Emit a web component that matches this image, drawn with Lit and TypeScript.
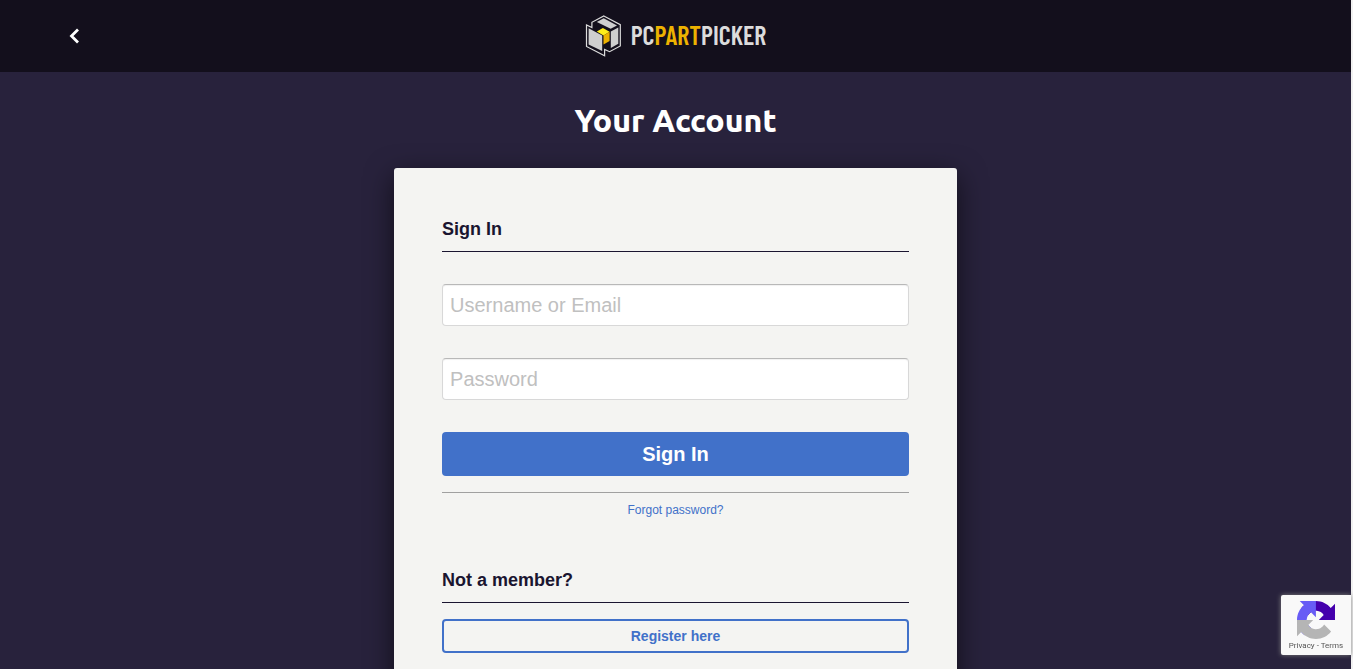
import { LitElement, html, css } from "lit";
import { customElement } from "lit/decorators.js";

@customElement("site-header")
class SiteHeader extends LitElement {
  static styles = css`
    :host { display: block; background: #130f1c; }
    .bar {
      display: grid;
      grid-template-columns: 1fr auto 1fr;
      align-items: center;
      height: 72px;
      padding: 0 5%;
    }
    .back { display: block; width: 16px; height: 16px; }
    .back svg { display: block; }
    .logo {
      display: flex;
      align-items: center;
      gap: 10px;
      color: #dcdcdc;
      text-decoration: none;
      font: 600 26px/40px "Barlow Condensed", "Roboto Condensed", "Liberation Sans Narrow", sans-serif;
    }
    .name { padding-bottom: 2px; }
    .accent { color: #edb200; }
  `;
  render() {
    return html`
      <header class="bar">
        <a class="back" href="#" aria-label="Back">
          <svg width="16" height="16" viewBox="0 0 16 16" fill="none" stroke="#fff" stroke-width="2.8">
            <path d="M10 1.500 3.500 8l6.500 6.500" />
          </svg>
        </a>
        <a class="logo" href="#" aria-label="PCPartPicker">
          <svg width="36" height="42" viewBox="0 0 36 42">
            <path fill="none" stroke="#dcdcdc" stroke-width="1.2"
              d="M18.8 1 35.300 9.700V31L24.600 36.700 19.600 34.500V40.700L1.500 31.500V10L6.900 12.500V7.300Z" />
            <path fill="#cfcfcf" d="M18.7 3.3 32 10.4 25.7 13.8 11.800 6.900Z" />
            <path fill="#cfcfcf" d="M3.600 13.300 17.200 20.500V36L3.600 29.400Z" />
            <path fill="#cfcfcf" d="M25.800 16.400 33.300 12.600V28.800L25.800 32.900Z" />
            <path fill="#ffee1b" d="M11.800 16.500 17.900 13.100 24.600 16.700 18.500 20.500Z" />
            <path fill="#edb200" d="M18.500 20.500 24.600 16.700V26L18.500 29.500Z" />
          </svg>
          <span class="name">PC<span class="accent">PART</span>PICKER</span>
        </a>
      </header>
    `;
  }
}

@customElement("recaptcha-badge")
class RecaptchaBadge extends LitElement {
  static styles = css`
    :host {
      position: fixed;
      right: 2px;
      bottom: 14px;
      width: 70px;
      height: 60px;
      box-sizing: border-box;
      padding-top: 6px;
      background: #f9f9f9;
      border-radius: 2px 0 0 2px;
      box-shadow: 0 0 5px #808080;
      text-align: center;
    }
    svg { display: block; margin: 0 auto; }
    .terms { padding-top: 1px; font: 8px/12px Roboto, sans-serif; color: #555; white-space: nowrap; }
    .terms a { color: #555; text-decoration: none; }
  `;
  render() {
    return html`
      <svg width="38" height="38" viewBox="0 0 64 64">
        <path fill="#4500ad" d="M64 31.955l-.033-1.370V4.687l-7.160 7.160C50.948 4.674 42.033.093 32.050.093c-10.400 0-19.622 4.960-25.458 12.640l11.736 11.860a15.550 15.550 0 0 1 4.754-5.334c2.050-1.600 4.952-2.906 8.968-2.906.485 0 .860.057 1.135.163 4.976.393 9.288 3.140 11.828 7.124l-8.307 8.307L64 31.953Z" />
        <path fill="#685cf5" d="M31.862.094l-1.370.033H4.594l7.160 7.160C4.580 13.147 0 22.060 0 32.046c0 10.400 4.960 19.622 12.640 25.458L24.500 45.768a15.550 15.550 0 0 1-5.334-4.754c-1.600-2.050-2.906-4.952-2.906-8.968 0-.485.057-.860.163-1.135.393-4.976 3.140-9.288 7.124-11.828l8.307 8.307L31.860.095Z" />
        <path fill="#b5b5b5" d="M.001 32.045l.033 1.370v25.898l7.160-7.160c5.860 7.173 14.774 11.754 24.760 11.754 10.400 0 19.622-4.960 25.458-12.640l-11.736-11.860a15.550 15.550 0 0 1-4.754 5.334c-2.050 1.600-4.952 2.906-8.968 2.906-.485 0-.860-.057-1.135-.163-4.976-.393-9.288-3.140-11.828-7.124l8.307-8.307Z" />
      </svg>
      <div class="terms"><a href="#">Privacy</a> - <a href="#">Terms</a></div>
    `;
  }
}

@customElement("app-root")
class AppRoot extends LitElement {
  static styles = css`
    :host {
      display: block;
      box-sizing: border-box;
      height: 100vh;
      overflow-y: auto;
      scrollbar-width: none;
      border-right: 2px solid #f1f1f1;
      background: #28223c;
      font-family: "Liberation Sans", Arial, sans-serif;
      color: #1a1530;
    }
    h1 {
      margin: 0;
      padding: 28px 0;
      text-align: center;
      color: #fff;
      font: 800 32px/40px Ubuntu, "Noto Sans", sans-serif;
    }
    .card {
      box-sizing: border-box;
      width: 41.6667%;
      min-width: 320px;
      margin: 0 auto;
      padding: 48px;
      background: #f4f4f2;
      border-radius: 3px;
      box-shadow: 0 8px 28px rgba(0, 0, 0, 0.6);
    }
    h2 {
      margin: 0;
      padding-bottom: 9px;
      border-bottom: 1px solid #1a1530;
      font-size: 18px;
      line-height: 26px;
    }
    form { display: grid; gap: 32px; padding: 32px 0 16px; }
    input {
      box-sizing: border-box;
      width: 100%;
      height: 42px;
      padding: 0 7px;
      border: 1px solid #d8d8d8;
      border-top-color: #b8b8b8;
      border-radius: 4px;
      background: #fff;
      box-shadow: inset 0 1px 1px rgba(0, 0, 0, 0.06);
      color: #1a1530;
      font: 20px "Liberation Sans", Arial, sans-serif;
    }
    input::placeholder { color: #c0c0c0; opacity: 1; }
    button {
      height: 44px;
      border: 0;
      border-radius: 4px;
      background: #4171c9;
      color: #fff;
      font: 700 20px "Liberation Sans", Arial, sans-serif;
    }
    .forgot {
      margin-bottom: 48px;
      padding-top: 8px;
      border-top: 1px solid #a0a0a0;
      text-align: center;
      font-size: 12px;
      line-height: 18px;
    }
    a { color: #4171c9; text-decoration: none; }
    .register {
      display: block;
      margin-top: 16px;
      border: 2px solid #4171c9;
      border-radius: 4px;
      text-align: center;
      font-size: 14px;
      font-weight: 700;
      line-height: 30px;
    }
  `;
  render() {
    return html`
      <site-header></site-header>
      <main>
        <h1>Your Account</h1>
        <section class="card">
          <h2>Sign In</h2>
          <form>
            <input type="text" aria-label="Username or Email" placeholder="Username or Email" />
            <input type="password" aria-label="Password" placeholder="Password" />
            <button type="button">Sign In</button>
          </form>
          <div class="forgot"><a href="#">Forgot password?</a></div>
          <h2>Not a member?</h2>
          <a class="register" href="#">Register here</a>
        </section>
      </main>
      <recaptcha-badge></recaptcha-badge>
    `;
  }
}
